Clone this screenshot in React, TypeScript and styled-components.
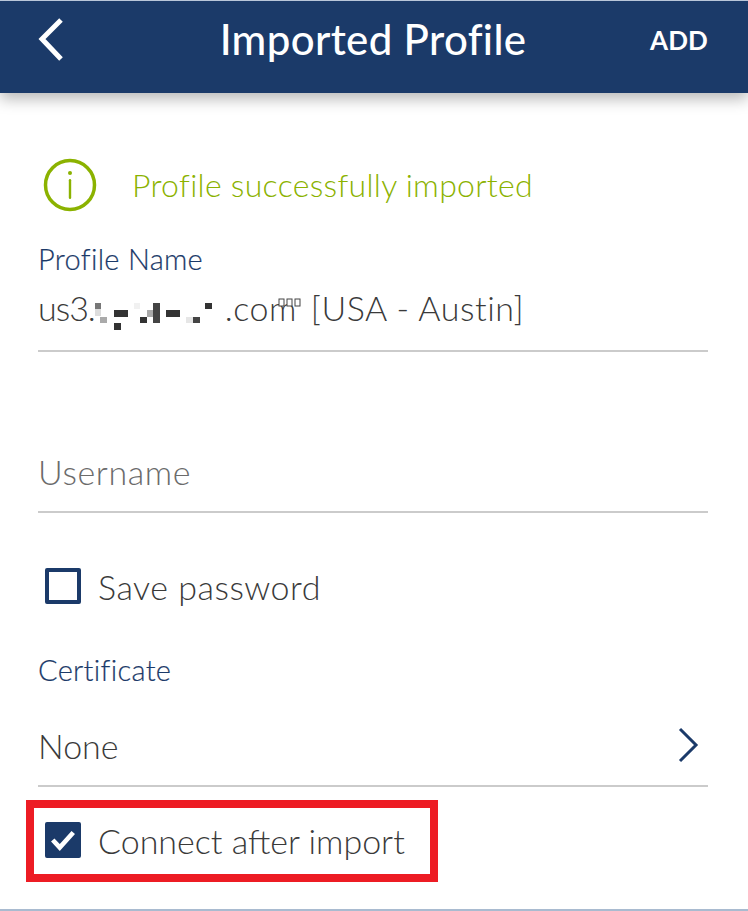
import React from "react";
import styled, { createGlobalStyle } from "styled-components";

const Global = createGlobalStyle`
  html, body { margin: 0; padding: 0; background: #fff; }
  body { font-family: Lato, "Open Sans", "Liberation Sans", sans-serif; }
`;

const Page = styled.div`
  width: 748px;
  height: 911px;
  display: flex;
  flex-direction: column;
  overflow: hidden;
  background: #fff;
  border-top: 1px solid #b9c6d9;
  border-bottom: 2px solid #a9bbd0;
  box-sizing: border-box;
`;

const Header = styled.header`
  height: 92px;
  flex: none;
  background: #1b3a69;
  box-shadow: 0 6px 14px rgba(0, 0, 0, 0.28);
  display: grid;
  grid-template-columns: 1fr auto 1fr;
  align-items: center;
  padding: 0 40px 14px 38px;
  box-sizing: border-box;
  color: #fff;
`;

const BackIcon = styled.svg`
  width: 28px;
  height: 46px;
  display: block;
`;

const Title = styled.h1`
  margin: 0 0 2px;
  font-size: 42px;
  font-weight: 500;
  letter-spacing: 0.35px;
  line-height: 1;
`;

const AddButton = styled.span`
  justify-self: end;
  font-size: 26px;
  font-weight: 700;
  letter-spacing: 0.1px;
`;

const Form = styled.main`
  padding: 64px 40px 0 38px;
  display: flex;
  flex-direction: column;
`;

const Notice = styled.div`
  display: flex;
  align-items: center;
  gap: 35px;
  padding-left: 5px;
  height: 56px;
  color: #8bb200;
  font-size: 32px;
  font-weight: 300;
  letter-spacing: 0.28px;
`;

const NoticeText = styled.span`
  margin-top: -2px;
`;

const InfoIcon = styled.svg`
  width: 54px;
  height: 54px;
  flex: none;
`;

const FieldLabel = styled.div`
  color: #1b3a69;
  font-size: 29px;
  font-weight: 300;
  letter-spacing: 0.3px;
  line-height: 34px;
  -webkit-text-stroke: 0.2px #1b3a69;
`;

const ProfileBlock = styled.div`
  margin-top: 29px;
`;

const ValueRow = styled.div<{ $height: number; $muted?: boolean; $spacing: number }>`
  height: ${(p) => p.$height}px;
  display: flex;
  align-items: center;
  border-bottom: 2px solid #cbcbcb;
  color: ${(p) => (p.$muted ? "#6b6b6b" : "#3a3a3a")};
  font-size: 34px;
  font-weight: 300;
  letter-spacing: ${(p) => p.$spacing}px;
  box-sizing: border-box;
  white-space: pre;
`;

const ProfileValue = styled(ValueRow)`
  align-items: flex-start;
  padding-top: 11px;
`;

const HostPrefix = styled.span`
  letter-spacing: -1px;
`;

const RedactedPixels = styled.svg`
  width: 132px;
  height: 32px;
  flex: none;
  margin: 13px 0 0 -2px;
`;

const DomainEnd = styled.span`
  position: relative;
  margin-right: 4px;
`;

const TofuMarks = styled.svg`
  position: absolute;
  left: 53px;
  top: 11px;
  width: 24px;
  height: 10px;
`;

const UsernameRow = styled(ValueRow)`
  margin-top: 78px;
  padding-top: 2px;
`;

const CheckRow = styled.div<{ $spacing: number }>`
  display: flex;
  align-items: center;
  gap: 17px;
  padding-left: 7px;
  color: #3a3a3a;
  font-size: 34px;
  font-weight: 300;
  letter-spacing: ${(p) => p.$spacing}px;
`;

const SaveRow = styled(CheckRow)`
  margin-top: 54px;
  height: 38px;
`;

const Box = styled.span<{ $checked?: boolean }>`
  width: 36px;
  height: 36px;
  box-sizing: border-box;
  border-radius: 2px;
  border: 4px solid #1b3a69;
  background: ${(p) => (p.$checked ? "#1b3a69" : "#fff")};
  display: flex;
  align-items: center;
  justify-content: center;
  flex: none;
`;

const CertificateBlock = styled.div`
  margin-top: 48px;
`;

const CertificateRow = styled(ValueRow)`
  justify-content: space-between;
  padding: 18px 9px 0 0;
`;

const ChevronIcon = styled.svg`
  width: 22px;
  height: 38px;
`;

const Highlight = styled.div`
  margin: 13px 0 0 -12px;
  width: 412px;
  height: 82px;
  border: 8px solid #ed1c24;
  box-sizing: border-box;
  display: flex;
  align-items: center;
  padding-bottom: 2px;
`;

const HighlightRow = styled(CheckRow)`
  padding-left: 11px;
`;

const pixels: [number, number, number, number, string][] = [
  [2, 3, 6, 6, "#777"], [2, 9, 6, 7, "#ddd"], [7, 17, 7, 6, "#aaa"],
  [21, 10, 14, 7, "#333"], [21, 23, 7, 7, "#333"], [41, 3, 6, 6, "#f1f1f1"],
  [47, 17, 7, 6, "#333"], [54, 10, 7, 7, "#aaa"], [60, 3, 7, 20, "#444"],
  [73, 10, 14, 7, "#333"], [93, 17, 7, 6, "#e6e6e6"], [100, 17, 7, 6, "#444"],
  [112, 3, 7, 6, "#333"],
];

export default function App() {
  return (
    <Page>
      <Global />
      <Header>
        <BackIcon viewBox="0 0 28 46" aria-hidden>
          <path d="M23 3 L4 22 L23 42" fill="none" stroke="#fff" strokeWidth="5" />
        </BackIcon>
        <Title>Imported Profile</Title>
        <AddButton>ADD</AddButton>
      </Header>
      <Form>
        <Notice>
          <InfoIcon viewBox="0 0 54 54" aria-hidden>
            <circle cx="27" cy="27" r="24.5" fill="none" stroke="#8bb200" strokeWidth="3.5" />
            <circle cx="27" cy="15" r="2" fill="#8bb200" />
            <rect x="25.8" y="21" width="2.4" height="20" rx="1.2" fill="#8bb200" />
          </InfoIcon>
          <NoticeText>Profile successfully imported</NoticeText>
        </Notice>
        <ProfileBlock>
          <FieldLabel>Profile Name</FieldLabel>
          <ProfileValue $height={76} $spacing={0.55}>
            <HostPrefix>us3.</HostPrefix>
            <RedactedPixels viewBox="0 0 132 32" aria-hidden>
              {pixels.map(([x, y, w, h, c], i) => (
                <rect key={i} x={x} y={y} width={w} height={h} fill={c} />
              ))}
            </RedactedPixels>
            <DomainEnd>
              .com
              <TofuMarks viewBox="0 0 24 10" aria-hidden>
                <g fill="#fff" stroke="#444" strokeWidth="1">
                  <rect x="1" y="1" width="5" height="7" />
                  <rect x="9" y="1" width="5" height="7" />
                  <rect x="17" y="1" width="5" height="7" />
                </g>
              </TofuMarks>
            </DomainEnd>
            {" [USA - Austin]"}
          </ProfileValue>
        </ProfileBlock>
        <UsernameRow $height={83} $muted $spacing={0.6}>Username</UsernameRow>
        <SaveRow $spacing={0.5}>
          <Box />
          Save password
        </SaveRow>
        <CertificateBlock>
          <FieldLabel>Certificate</FieldLabel>
          <CertificateRow $height={100} $spacing={0}>
            None
            <ChevronIcon viewBox="0 0 22 38" aria-hidden>
              <path d="M3 3 L19 19 L3 35" fill="none" stroke="#1b3a69" strokeWidth="3" />
            </ChevronIcon>
          </CertificateRow>
        </CertificateBlock>
        <Highlight>
          <HighlightRow $spacing={0}>
            <Box $checked>
              <svg width="30" height="24" viewBox="0 0 30 24" aria-hidden>
                <path d="M4 12 L11.5 20 L26 4" fill="none" stroke="#fff" strokeWidth="5" />
              </svg>
            </Box>
            Connect after import
          </HighlightRow>
        </Highlight>
      </Form>
    </Page>
  );
}
